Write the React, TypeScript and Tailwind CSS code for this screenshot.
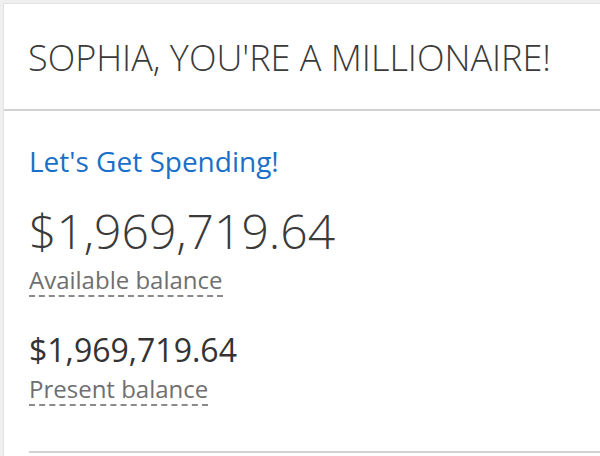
import React from "react";

export default function App() {
  const font = { fontFamily: '"Open Sans", "Liberation Sans", sans-serif' };
  return (
    <div className="h-[456px] w-[600px] overflow-hidden bg-[#efefef] pl-[3px] pt-[3px]" style={font}>
      <div className="h-full w-full border-l border-t border-[#e2e2e2] bg-white">
        <div className="flex h-[107px] items-center border-b-2 border-[#d2d2d2] pl-[24px]">
          <h1 className="text-[36px] font-light leading-none text-[#3a3a3a] pt-[2px]">
            SOPHIA, YOU'RE A MILLIONAIRE!
          </h1>
        </div>
        <div className="pl-[25px] pr-0">
          <div className="pt-[33px] text-[28px] leading-[34px] text-[#1a6fc8]">Let's Get Spending!</div>
          <div className="mt-[26px] text-[48px] font-light leading-[54px] text-[#3a3a3a]">$1,969,719.64</div>
          <div className="mt-[7px] flex">
            <span className="border-b-2 border-dashed border-[#8a8a8a] text-[24px] leading-[30px] text-[#6f6f6f]">
              Available balance
            </span>
          </div>
          <div className="mt-[33px] text-[32px] leading-[40px] text-[#333333]">$1,969,719.64</div>
          <div className="mt-[4px] flex">
            <span className="border-b-2 border-dashed border-[#8a8a8a] text-[24px] leading-[30px] text-[#6f6f6f]">
              Present balance
            </span>
          </div>
          <div className="mt-[45px] border-b-2 border-[#d2d2d2]" />
        </div>
      </div>
    </div>
  );
}
